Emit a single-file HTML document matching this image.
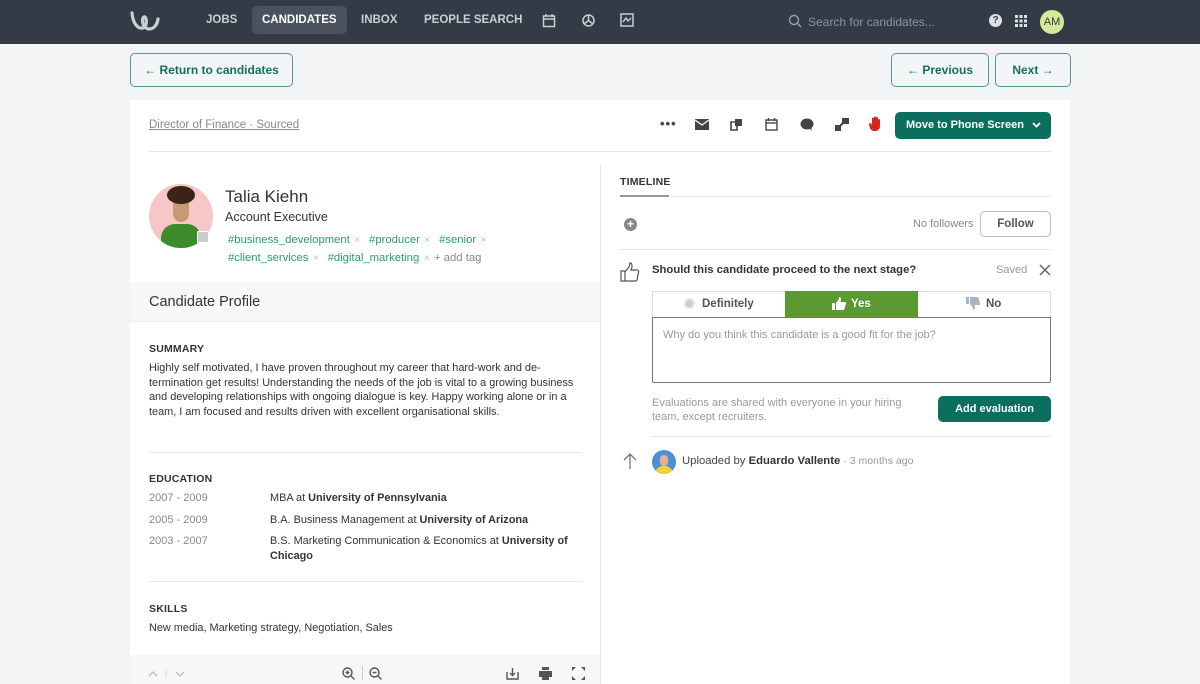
<!DOCTYPE html>
<html><head><style>
*{box-sizing:border-box;margin:0;padding:0}
body{width:1200px;height:684px;overflow:hidden;background:#f2f4f5;font-family:"Liberation Sans",sans-serif;color:#333;position:relative}
.a{position:absolute}
.nav{left:0;top:0;width:1200px;height:44px;background:#343b46}
.nav .t{color:#c9ced5;font-size:11.5px;font-weight:bold;top:14px;letter-spacing:0}
.btn{border:1px solid #4e9b89;border-radius:5px;color:#176e5c;font-size:12px;font-weight:bold;text-align:center;background:#f3f6f6}
.card{left:130px;top:100px;width:940px;height:584px;background:#fff}
.g{color:#2a9d6c;font-size:11.3px}
.x{color:#bbb;font-size:10px}
.h{font-size:10.5px;font-weight:bold;color:#333;letter-spacing:.2px}
.p{font-size:10.9px;line-height:14.5px;color:#333}
.gr{color:#888;font-size:11px}
.line{height:1px;background:#e6e6e6}
</style></head><body>
<div class="a nav">
 <svg class="a" style="left:130px;top:10px" width="36" height="22" viewBox="0 0 36 22"><path d="M2 3 C3 14 8 19 13 18 C17 17 17 9 15 7 C12 6 11 14 16 18 C21 21 27 17 28 9" fill="none" stroke="#c9ced5" stroke-width="3.2" stroke-linecap="round"/></svg>
 <div class="a t" style="left:206px">JOBS</div>
 <div class="a" style="left:252px;top:6px;width:95px;height:28px;background:#4a525d;border-radius:5px"></div>
 <div class="a t" style="left:262px;color:#fff">CANDIDATES</div>
 <div class="a t" style="left:361px">INBOX</div>
 <div class="a t" style="left:424px">PEOPLE SEARCH</div>
 <svg class="a" style="left:542px;top:13px" width="14" height="15"><rect x="1.5" y="3" width="11" height="10.5" fill="none" stroke="#c9ced5" stroke-width="1.5"/><line x1="1.5" y1="6" x2="12.5" y2="6" stroke="#c9ced5" stroke-width="1.5"/><line x1="4" y1="1" x2="4" y2="4" stroke="#c9ced5" stroke-width="1.5"/><line x1="10" y1="1" x2="10" y2="4" stroke="#c9ced5" stroke-width="1.5"/></svg>
 <svg class="a" style="left:581px;top:13px" width="15" height="15"><circle cx="7.5" cy="7.5" r="5.5" fill="none" stroke="#c9ced5" stroke-width="1.5"/><path d="M7.5 2v5.5l4 3M7.5 7.5l-4 3" stroke="#c9ced5" stroke-width="1.5" fill="none"/></svg>
 <svg class="a" style="left:620px;top:13px" width="14" height="14"><rect x="1" y="1" width="12" height="12" fill="none" stroke="#c9ced5" stroke-width="1.5"/><path d="M3 9l3-4 2 3 3-3" stroke="#c9ced5" stroke-width="1.4" fill="none"/></svg>
 <svg class="a" style="left:788px;top:14px" width="14" height="14"><circle cx="6" cy="6" r="4.5" fill="none" stroke="#9aa1aa" stroke-width="1.4"/><line x1="9.5" y1="9.5" x2="13" y2="13" stroke="#9aa1aa" stroke-width="1.4"/></svg>
 <div class="a" style="left:808px;top:15px;color:#8c939c;font-size:12px">Search for candidates...</div>
 <div class="a" style="left:989px;top:14px;width:13px;height:13px;border-radius:50%;background:#dde1e5;color:#343b46;font-size:10px;font-weight:bold;text-align:center;line-height:13px">?</div>
 <svg class="a" style="left:1015px;top:15px" width="12" height="12"><g fill="#dde1e5"><rect x="0" y="0" width="3" height="3"/><rect x="4.5" y="0" width="3" height="3"/><rect x="9" y="0" width="3" height="3"/><rect x="0" y="4.5" width="3" height="3"/><rect x="4.5" y="4.5" width="3" height="3"/><rect x="9" y="4.5" width="3" height="3"/><rect x="0" y="9" width="3" height="3"/><rect x="4.5" y="9" width="3" height="3"/><rect x="9" y="9" width="3" height="3"/></g></svg>
 <div class="a" style="left:1040px;top:10px;width:24px;height:24px;border-radius:50%;background:#d6e89a;color:#343b46;font-size:11px;text-align:center;line-height:24px">AM</div>
</div>
<div class="a btn" style="left:130px;top:53px;width:163px;height:34px;line-height:32px">← Return to candidates</div>
<div class="a btn" style="left:891px;top:53px;width:98px;height:34px;line-height:32px">← Previous</div>
<div class="a btn" style="left:995px;top:53px;width:76px;height:34px;line-height:32px">Next →</div>

<div class="a card"></div>
<div class="a" style="left:149px;top:119px;font-size:11.5px;color:#888;text-decoration:underline">Director of Finance · Sourced</div>
<div class="a" style="left:660px;top:116px;font-size:13px;color:#444;font-weight:bold;letter-spacing:1px">•••</div>
<svg class="a" style="left:695px;top:119px" width="14" height="11"><path d="M0 0h14v11H0z" fill="#444"/><path d="M0 1l7 5 7-5" stroke="#fff" stroke-width="1.2" fill="none"/></svg>
<svg class="a" style="left:730px;top:118px" width="13" height="13"><path d="M1 4h6v8H1z" fill="none" stroke="#444" stroke-width="1.6"/><path d="M5 1h7v7H5z" fill="#444"/></svg>
<svg class="a" style="left:765px;top:118px" width="13" height="13"><rect x="1" y="2" width="11" height="10" fill="none" stroke="#444" stroke-width="1.4"/><path d="M1 5h11" stroke="#444" stroke-width="1.4"/><path d="M3.5 0v3M9.5 0v3" stroke="#444" stroke-width="1.4"/></svg>
<svg class="a" style="left:800px;top:118px" width="14" height="14"><ellipse cx="7" cy="6" rx="6.5" ry="5.5" fill="#444"/><path d="M9 10l3 3-1-4z" fill="#444"/></svg>
<svg class="a" style="left:835px;top:118px" width="14" height="13"><path d="M0 7h6v6H0zM7 0h7v6H7z" fill="#444"/><path d="M5 8l4-4" stroke="#444" stroke-width="2"/></svg>
<svg class="a" style="left:869px;top:116px" width="14" height="16"><path d="M3 6V2.5a1 1 0 012 0V6V1.5a1 1 0 012 0V6V2a1 1 0 012 0v5V4a1 1 0 012 0v6c0 3-2 5-5 5s-4-1-5-3L0 8.5c-.5-1 1-2 2-1l1 1.5z" fill="#d9261c"/></svg>
<div class="a" style="left:895px;top:112px;width:156px;height:27px;background:#0b6e5e;border-radius:5px;color:#fff;font-size:11px;font-weight:bold;line-height:27px;padding-left:11px">Move to Phone Screen</div>
<svg class="a" style="left:1032px;top:122px" width="9" height="7"><path d="M1 1l3.5 3.5L8 1" stroke="#fff" stroke-width="1.8" fill="none"/></svg>
<div class="a line" style="left:149px;top:151px;width:902px"></div>
<div class="a" style="left:600px;top:165px;width:1px;height:519px;background:#e6e6e6"></div>

<!-- left -->
<div class="a" style="left:149px;top:184px;width:64px;height:64px;border-radius:50%;background:#f7c6c6;overflow:hidden">
 <div class="a" style="left:12px;top:40px;width:40px;height:30px;border-radius:14px 14px 0 0;background:#3d8c2c"></div>
 <div class="a" style="left:24px;top:12px;width:16px;height:26px;border-radius:8px;background:#c69a72"></div>
 <div class="a" style="left:18px;top:2px;width:28px;height:18px;border-radius:50%;background:#3a2417"></div>
</div>
<div class="a" style="left:197px;top:231px;width:12px;height:12px;background:#ccc;border:1px solid #fff"></div>
<div class="a" style="left:225px;top:187px;font-size:17px;color:#2d333a">Talia Kiehn</div>
<div class="a" style="left:225px;top:210px;font-size:12.5px;color:#333">Account Executive</div>
<div class="a" style="left:228px;top:230px;white-space:nowrap"><span class="g">#business_development</span> <span class="x">×</span>&nbsp; <span class="g">#producer</span> <span class="x">×</span>&nbsp; <span class="g">#senior</span> <span class="x">×</span></div>
<div class="a" style="left:228px;top:248px;white-space:nowrap"><span class="g">#client_services</span> <span class="x">×</span>&nbsp; <span class="g">#digital_marketing</span> <span class="x">×</span> <span style="color:#888;font-size:11.3px">+ add tag</span></div>
<div class="a" style="left:130px;top:282px;width:470px;height:40px;background:#f7f7f7;border-bottom:1px solid #eee"></div>
<div class="a" style="left:149px;top:294px;font-size:14.5px;color:#333">Candidate Profile</div>
<div class="a h" style="left:149px;top:343px">SUMMARY</div>
<div class="a p" style="left:149px;top:361px;width:432px">Highly self motivated, I have proven throughout my career that hard-work and de-termination get results! Understanding the needs of the job is vital to a growing business and developing relationships with ongoing dialogue is key. Happy working alone or in a team, I am focused and results driven with excellent organisational skills.</div>
<div class="a line" style="left:149px;top:452px;width:433px"></div>
<div class="a h" style="left:149px;top:473px">EDUCATION</div>
<div class="a gr" style="left:149px;top:492px">2007 - 2009</div><div class="a p" style="left:270px;top:491px">MBA at <b>University of Pennsylvania</b></div>
<div class="a gr" style="left:149px;top:514px">2005 - 2009</div><div class="a p" style="left:270px;top:513px">B.A. Business Management at <b>University of Arizona</b></div>
<div class="a gr" style="left:149px;top:535px">2003 - 2007</div><div class="a p" style="left:270px;top:534px;width:305px">B.S. Marketing Communication &amp; Economics at <b>University of Chicago</b></div>
<div class="a line" style="left:149px;top:581px;width:433px"></div>
<div class="a h" style="left:149px;top:603px">SKILLS</div>
<div class="a p" style="left:149px;top:621px">New media, Marketing strategy, Negotiation, Sales</div>
<div class="a" style="left:130px;top:655px;width:470px;height:29px;background:#f7f7f7"></div>
<svg class="a" style="left:148px;top:670px" width="40" height="8"><path d="M1 6l4-4 4 4" stroke="#bbb" stroke-width="1.3" fill="none"/><path d="M18 0v8" stroke="#ddd"/><path d="M28 2l4 4 4-4" stroke="#bbb" stroke-width="1.3" fill="none"/></svg>
<svg class="a" style="left:342px;top:667px" width="13" height="13"><circle cx="5.5" cy="5.5" r="4.5" fill="none" stroke="#555" stroke-width="1.4"/><path d="M9 9l3.5 3.5M3.5 5.5h4M5.5 3.5v4" stroke="#555" stroke-width="1.4"/></svg>
<div class="a" style="left:362px;top:666px;width:1px;height:14px;background:#ccc"></div>
<svg class="a" style="left:369px;top:667px" width="13" height="13"><circle cx="5.5" cy="5.5" r="4.5" fill="none" stroke="#555" stroke-width="1.4"/><path d="M9 9l3.5 3.5M3.5 5.5h4" stroke="#555" stroke-width="1.4"/></svg>
<svg class="a" style="left:506px;top:667px" width="13" height="13"><path d="M1 5v7h11V5" fill="none" stroke="#555" stroke-width="1.4"/><path d="M6.5 1v7M4 6l2.5 2.5L9 6" stroke="#555" stroke-width="1.4" fill="none"/></svg>
<svg class="a" style="left:539px;top:667px" width="13" height="13"><path d="M3 0h7v3H3zM0 4h13v6H0zM3 8h7v5H3z" fill="#555"/></svg>
<svg class="a" style="left:572px;top:667px" width="13" height="13"><path d="M0 0h4L0 4zM13 0H9l4 4zM0 13h4L0 9zM13 13H9l4-4z" fill="#555"/></svg>

<!-- right -->
<div class="a" style="left:620px;top:176px;font-size:10.5px;font-weight:bold;color:#333;letter-spacing:.2px">TIMELINE</div>
<div class="a" style="left:620px;top:195px;width:49px;height:2px;background:#999"></div>
<div class="a line" style="left:669px;top:196px;width:382px"></div>
<div class="a" style="left:624px;top:218px;width:13px;height:13px;border-radius:50%;background:#888;color:#fff;font-size:12px;font-weight:bold;text-align:center;line-height:13px">+</div>
<div class="a" style="left:913px;top:218px;color:#888;font-size:11px">No followers</div>
<div class="a" style="left:980px;top:211px;width:71px;height:26px;border:1px solid #bbb;border-radius:5px;text-align:center;line-height:24px;font-size:11.5px;font-weight:bold;color:#555">Follow</div>
<div class="a line" style="left:620px;top:249px;width:431px"></div>
<svg class="a" style="left:620px;top:262px" width="20" height="20"><path d="M1 9h4v10H1zM5 10l4-5 1-4c2 0 2 2 2 4l-1 3h6c1 0 2 1 1.5 2.5L17 18c-.3.7-1 1-2 1H5" fill="none" stroke="#555" stroke-width="1.2"/></svg>
<div class="a" style="left:652px;top:264px;font-size:11.3px;font-weight:bold;color:#333">Should this candidate proceed to the next stage?</div>
<div class="a" style="left:996px;top:264px;color:#999;font-size:11px">Saved</div>
<svg class="a" style="left:1039px;top:264px" width="12" height="12"><path d="M1 1l10 10M11 1L1 11" stroke="#666" stroke-width="1.5"/></svg>
<div class="a" style="left:652px;top:291px;width:399px;height:27px;border:1px solid #ddd;border-bottom:none"></div>
<div class="a" style="left:684px;top:298px;width:11px;height:11px;border-radius:50%;background:#ccc;border:2px solid #e5e5e5"></div>
<div class="a" style="left:702px;top:298px;font-size:11.5px;font-weight:bold;color:#555">Definitely</div>
<div class="a" style="left:785px;top:291px;width:133px;height:27px;background:#5a9a31"></div>
<svg class="a" style="left:832px;top:297px" width="14" height="13"><path d="M0 6h3v7H0zM4 6l3-4V0c1.5 0 2 1 2 2.5L8.5 5H13c.8 0 1.2.7 1 1.5L12.5 12c-.2.6-.7 1-1.4 1H4z" fill="#fff"/></svg>
<div class="a" style="left:851px;top:298px;color:#fff;font-size:11.5px;font-weight:bold">Yes</div>
<svg class="a" style="left:966px;top:297px" width="14" height="13"><path d="M0 0h3v7H0zM4 7l3 4v2c1.5 0 2-1 2-2.5L8.5 8H13c.8 0 1.2-.7 1-1.5L12.5 1c-.2-.6-.7-1-1.4-1H4z" fill="#a8b4c0"/></svg>
<div class="a" style="left:986px;top:298px;font-size:11.5px;font-weight:bold;color:#555">No</div>
<div class="a" style="left:652px;top:317px;width:399px;height:66px;border:1px solid #777;border-radius:0 0 2px 2px"></div>
<div class="a" style="left:663px;top:329px;color:#999;font-size:11px">Why do you think this candidate is a good fit for the job?</div>
<div class="a" style="left:652px;top:397px;width:270px;color:#999;font-size:11px;line-height:13.5px">Evaluations are shared with everyone in your hiring team, except recruiters.</div>
<div class="a" style="left:938px;top:396px;width:113px;height:26px;background:#0b6e5e;border-radius:5px;color:#fff;font-size:11px;font-weight:bold;text-align:center;line-height:26px">Add evaluation</div>
<div class="a line" style="left:652px;top:436px;width:399px"></div>
<svg class="a" style="left:622px;top:452px" width="16" height="18"><path d="M8 17V2M2 8l6-6 6 6" fill="none" stroke="#777" stroke-width="1.3"/></svg>
<div class="a" style="left:652px;top:450px;width:24px;height:24px;border-radius:50%;background:#4c8fd8;overflow:hidden"><div class="a" style="left:3px;top:16px;width:18px;height:10px;border-radius:8px 8px 0 0;background:#f0d33a"></div><div class="a" style="left:8px;top:5px;width:8px;height:11px;border-radius:4px;background:#e8b08c"></div></div>
<div class="a" style="left:682px;top:455px;font-size:11.3px;color:#444">Uploaded by <b style="color:#333">Eduardo Vallente</b> <span style="color:#999;font-size:10.5px">· 3 months ago</span></div>
</body></html>
